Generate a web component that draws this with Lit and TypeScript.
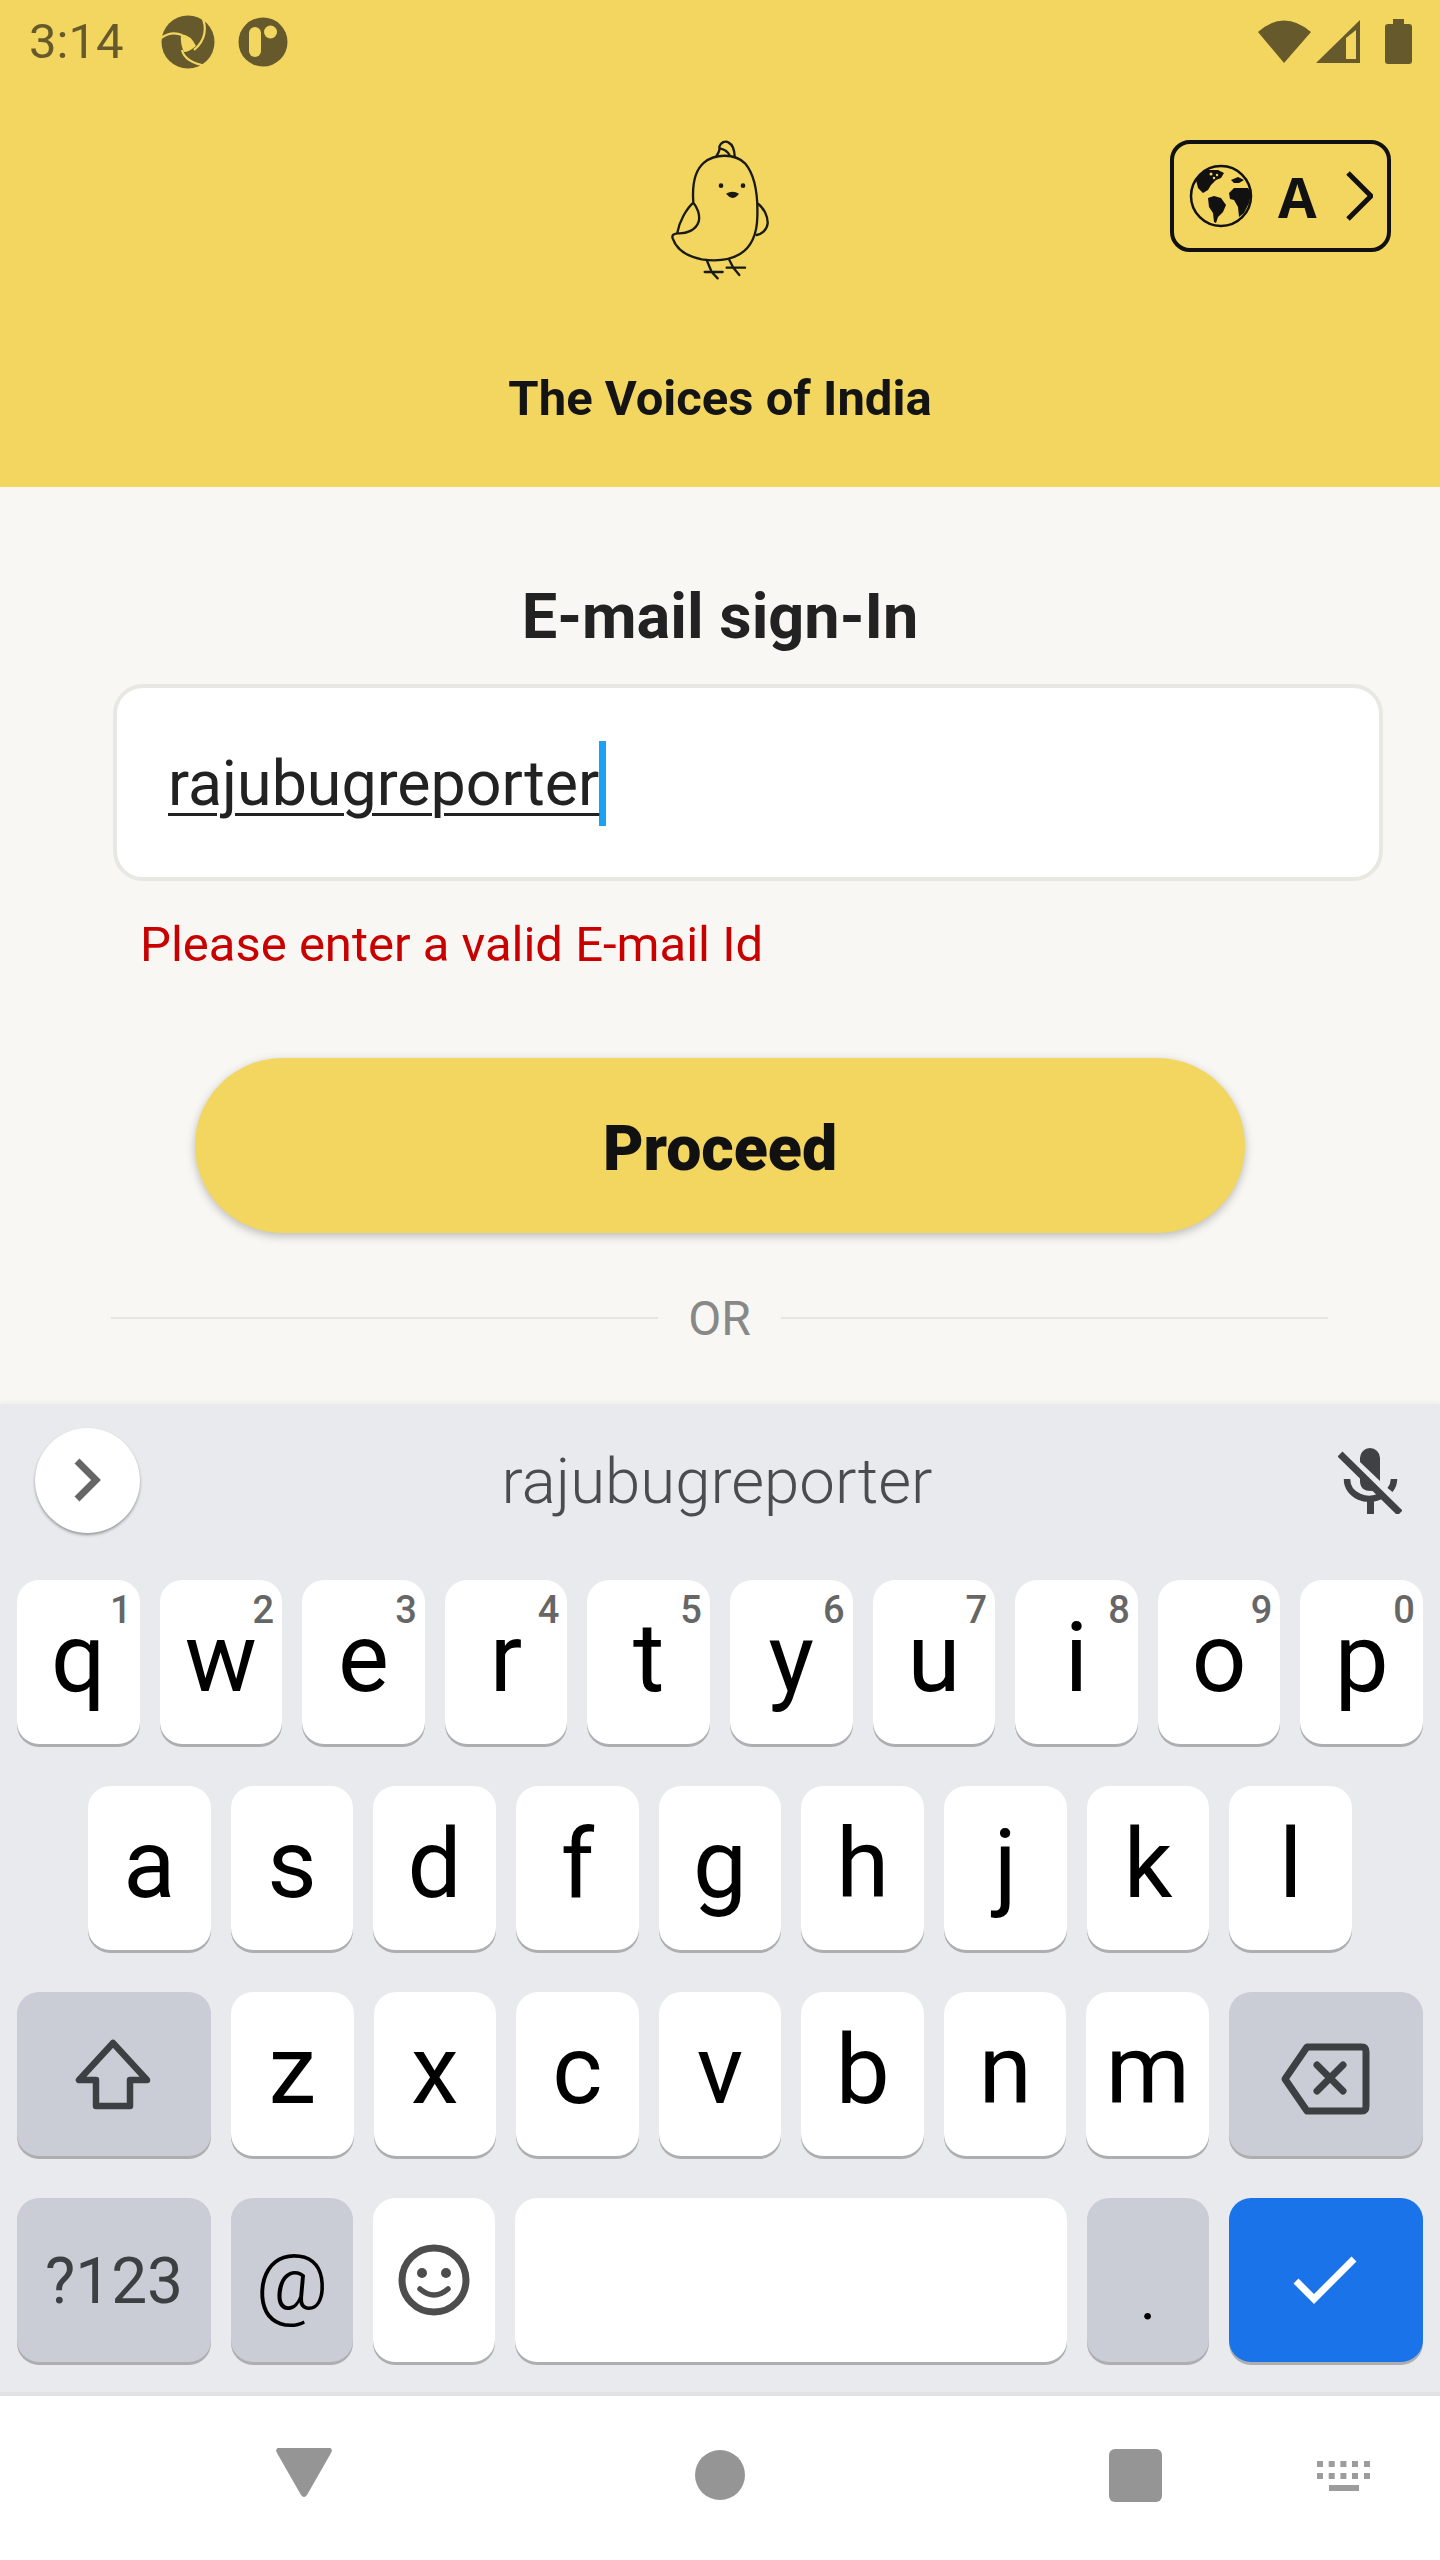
import { LitElement, html, css, svg } from 'lit';
import { customElement } from 'lit/decorators.js';

const ROW_1 = [['q', '1'], ['w', '2'], ['e', '3'], ['r', '4'], ['t', '5'], ['y', '6'], ['u', '7'], ['i', '8'], ['o', '9'], ['p', '0']];
const ROW_2 = ['a', 's', 'd', 'f', 'g', 'h', 'j', 'k', 'l'];
const ROW_3 = ['z', 'x', 'c', 'v', 'b', 'n', 'm'];

const statusLogos = html`
  <svg class="logo-a" width="56" height="56" viewBox="0 0 56 56">
    <circle cx="28" cy="28" r="26.500" fill="#665a2c"></circle>
    <path d="M21 20Q31 21 36 32Q29 38 24 38Q20 30 21 20Z" fill="#f2d660"></path>
    <g fill="none" stroke="#f2d660" stroke-width="2.200">
      <path d="M42 3C47 13 46 26 34 36"></path>
      <path d="M1 24C8 19 15 18 22 21"></path>
      <path d="M22 36C24 45 34 50 47 52"></path>
    </g>
  </svg>
  <svg class="logo-b" width="50" height="50" viewBox="0 0 50 50">
    <circle cx="25" cy="25" r="24.500" fill="#665a2c"></circle>
    <rect x="11" y="10" width="12" height="30" rx="6" fill="#f2d660"></rect>
    <circle cx="32.500" cy="15" r="6.500" fill="#f2d660"></circle>
  </svg>
`;

const statusRight = html`
  <svg class="status-icons" width="160" height="50" viewBox="1256 17 160 50">
    <path d="M1258 32Q1284 9 1311 32L1284 63Z" fill="#665a2c"></path>
    <path fill-rule="evenodd" d="M1316 63L1360 20V63ZM1346 38V59H1356V30Z" fill="#665a2c"></path>
    <path d="M1393 19H1404V24H1409Q1412 24 1412 27V61Q1412 64 1409 64H1388Q1385 64 1385 61V27Q1385 24 1388 24H1393Z" fill="#665a2c"></path>
  </svg>
`;

const globe = html`
  <svg width="64" height="64" viewBox="0 0 64 64">
    <circle cx="32" cy="32" r="30" fill="none" stroke="#111" stroke-width="2.500"></circle>
    <g fill="#111">
      <path d="M7 16L15 6L29 6L35 9L32 14L27 16L22 21L19 26L14 29L9 24Z"></path>
      <path d="M19 34L25 32L32 34L37 41L34 48L29 53L27 59L25 58L24 49L20 43Z"></path>
      <path d="M40 29L45 24L59 24L62 29L60 39L55 49L50 53L49 43L45 36L41 35Z"></path>
      <path d="M42 16L49 13L55 16L50 19L45 19Z"></path>
    </g>
    <g fill="#f2d660">
      <circle cx="22" cy="10" r="1.500"></circle>
      <circle cx="28" cy="11" r="1.200"></circle>
      <circle cx="25" cy="14" r="1.200"></circle>
    </g>
  </svg>
`;

const chick = html`
  <svg class="chick" width="200" height="170" viewBox="0 0 600 510">
    <g fill="none" stroke="#1a1a14" stroke-width="7" stroke-linecap="round" stroke-linejoin="round">
      <path d="M220 248C216 195 226 150 252 128C285 100 345 100 375 130C405 165 414 225 412 290C411 345 395 380 360 402C330 420 285 424 245 418C205 410 170 390 158 355C155 345 160 342 172 340C200 342 228 330 236 305C241 285 232 262 220 248C198 268 178 305 172 338"></path>
      <path d="M415 252C432 265 444 290 443 310C441 330 425 342 410 345"></path>
      <path d="M290 106C296 98 300 88 298 80C302 68 316 60 326 68C338 74 343 92 344 108"></path>
      <path d="M302 86C312 88 322 94 328 104"></path>
      <path d="M260 420L275 456M254 456H308M275 456L293 475"></path>
      <path d="M328 420L340 443M320 443H375M340 443L358 465"></path>
    </g>
    <circle cx="303" cy="197" r="7" fill="#1a1a14"></circle>
    <circle cx="369" cy="197" r="7" fill="#1a1a14"></circle>
    <path d="M318 221Q338 209 357 221Q347 234 337 234Q327 232 318 221Z" fill="#1a1a14"></path>
  </svg>
`;

@customElement('app-root')
export class AppRoot extends LitElement {
  static styles = css`
    :host {
      display: block;
      width: 1440px;
      height: 2560px;
      overflow: hidden;
      background: #f8f7f3;
      font-family: Roboto, 'Liberation Sans', sans-serif;
    }

    .page {
      display: flex;
      flex-direction: column;
      height: 2560px;
    }

    /* yellow header */
    .header {
      height: 487px;
      background: #f2d660;
      display: flex;
      flex-direction: column;
      flex: none;
    }

    .status {
      height: 84px;
      display: flex;
      align-items: center;
      padding-left: 29px;
      color: #665a2c;
      font-size: 49px;
    }

    .time {
      width: 131px;
      line-height: 84px;
    }

    .logo-b {
      margin-left: 22px;
    }

    .status-icons {
      margin-left: auto;
      margin-right: 24px;
    }

    .brand {
      display: flex;
      justify-content: space-between;
      align-items: flex-start;
      padding: 36px 49px 0 620px;
      height: 170px;
    }

    .lang {
      box-sizing: border-box;
      width: 221px;
      height: 112px;
      margin-top: 20px;
      border: 4px solid #111;
      border-radius: 20px;
      display: flex;
      align-items: center;
      padding-left: 15px;
      color: #111;
    }

    .lang-a {
      font-family: 'Open Sans', sans-serif;
      font-weight: 700;
      font-size: 56px;
      line-height: 1;
      margin-left: 25px;
      width: 67px;
    }

    .tagline {
      margin-top: 79px;
      text-align: center;
      font-size: 49px;
      line-height: 60px;
      font-weight: 700;
      color: #141414;
    }

    /* sign in form */
    .form {
      flex: none;
      height: 917px;
      display: flex;
      flex-direction: column;
      padding-top: 93px;
      box-sizing: border-box;
    }

    .title {
      text-align: center;
      font-size: 63px;
      line-height: 74px;
      font-weight: 700;
      color: #222;
    }

    .input {
      box-sizing: border-box;
      margin: 30px 57px 0 113px;
      height: 197px;
      flex: none;
      background: #fff;
      border: 4px solid #e8e8e3;
      border-radius: 30px;
      display: flex;
      align-items: center;
      padding: 2px 0 0 51px;
    }

    .value {
      font-size: 62.700px;
      color: #222;
      line-height: 85px;
      text-decoration: underline;
      text-decoration-thickness: 3px;
      text-underline-offset: 8px;
      border-right: 7px solid #1da1f2;
    }

    .error {
      margin: 36px 0 0 140px;
      font-size: 49px;
      line-height: 56px;
      color: #c80000;
    }

    .proceed {
      margin: 85px 195px 0;
      height: 175px;
      flex: none;
      box-sizing: border-box;
      padding-top: 5px;
      border-radius: 88px;
      background: #f2d660;
      box-shadow: 0 3px 10px rgba(0, 0, 0, 0.25);
      display: flex;
      align-items: center;
      justify-content: center;
      font-size: 62.500px;
      font-weight: 900;
      color: #111;
    }

    .or {
      margin: 60px 112px 0 111px;
      display: flex;
      align-items: center;
      gap: 30px;
      height: 50px;
      font-size: 48px;
      color: #888;
    }

    .or i {
      flex: 1;
      height: 2px;
      background: #e6e6e0;
    }

    /* keyboard */
    .keyboard {
      flex: none;
      height: 992px;
      box-sizing: border-box;
      background: #e8eaed;
      border-bottom: 4px solid #e1e2e3;
      padding: 0 17px;
      box-shadow: 0 -2px 5px rgba(0, 0, 0, 0.04);
    }

    .suggest {
      height: 176px;
      box-sizing: border-box;
      padding-bottom: 24px;
      display: flex;
      align-items: center;
    }

    .suggest-btn {
      width: 105px;
      height: 105px;
      margin-left: 18px;
      border-radius: 50%;
      background: #fff;
      box-shadow: 0 2px 3px rgba(0, 0, 0, 0.35);
      display: flex;
      align-items: center;
      justify-content: center;
      flex: none;
    }

    .suggest-text {
      flex: 1;
      text-align: center;
      font-size: 63.500px;
      font-weight: 300;
      color: #4a4c50;
      padding: 3px 44px 0 0;
    }

    .mic {
      margin-right: 21px;
      flex: none;
    }

    .row {
      display: flex;
      gap: 20px;
      height: 166px;
      margin-bottom: 40px;
    }

    .row.home {
      padding: 0 71px;
    }

    .key {
      flex: 1 1 0;
      position: relative;
      box-sizing: border-box;
      background: #fff;
      border-radius: 22px;
      box-shadow: 0 3px 0 #adaeb0;
      display: flex;
      align-items: center;
      justify-content: center;
      height: 164px;
      padding-bottom: 9px;
      font-size: 96px;
      line-height: 1;
      color: #000;
      font-weight: 400;
    }

    .key.special {
      background: #cacdd5;
    }

    .key.wide {
      flex: 0 0 194px;
      padding-bottom: 0;
    }

    .key.space {
      flex: 0 0 552px;
    }

    .key.enter {
      background: #1a73e8;
    }

    .key.sym {
      font-size: 64px;
      color: #3c4043;
      padding-top: 3px;
    }

    .key.at {
      font-size: 80px;
      font-weight: 300;
      padding: 4px 0 0;
    }

    .key.smile {
      padding: 0;
    }

    .key.dot {
      font-size: 60px;
      align-items: flex-end;
      padding-bottom: 33px;
    }

    .hint {
      position: absolute;
      top: 11px;
      right: 8px;
      font-size: 38px;
      line-height: 38px;
      font-weight: 500;
      color: #666;
    }

    /* android nav */
    .nav {
      flex: 1;
      background: #fff;
      display: flex;
      align-items: flex-start;
    }

    .nav svg {
      flex: none;
    }

    .nav-back {
      margin: 52px 0 0 276px;
    }

    .nav-home {
      margin: 54px 0 0 363px;
    }

    .nav-recent {
      margin: 53px 0 0 364px;
    }

    .nav-ime {
      margin: 65px 0 0 155px;
    }
  `;

  private letter(label: string) {
    return html`<div class="key">${label}</div>`;
  }

  render() {
    return html`
      <div class="page">
        <div class="header">
          <div class="status">
            <span class="time">3:14</span>
            ${statusLogos} ${statusRight}
          </div>
          <div class="brand">
            ${chick}
            <div class="lang">
              ${globe}
              <span class="lang-a">A</span>
              <svg width="28" height="52" viewBox="0 0 28 52">
                <path d="M3 3L26 26L3 49" fill="none" stroke="#111" stroke-width="5"></path>
              </svg>
            </div>
          </div>
          <div class="tagline">The Voices of India</div>
        </div>

        <div class="form">
          <div class="title">E-mail sign-In</div>
          <div class="input"><span class="value">rajubugreporter</span></div>
          <div class="error">Please enter a valid E-mail Id</div>
          <div class="proceed">Proceed</div>
          <div class="or"><i></i><span>OR</span><i></i></div>
        </div>

        <div class="keyboard">
          <div class="suggest">
            <div class="suggest-btn">
              <svg width="30" height="44" viewBox="0 0 30 44">
                <path d="M4 3L23 22L4 41" fill="none" stroke="#666" stroke-width="7"></path>
              </svg>
            </div>
            <div class="suggest-text">rajubugreporter</div>
            <svg class="mic" width="64" height="68" viewBox="0 0 64 68">
              <path d="M22 12A10 10 0 0 1 42 12V35L22 16Z" fill="#404144"></path>
              <path d="M22 30V35Q22 45 33 45Q36 45 37 44Z" fill="#404144"></path>
              <path d="M9 33C9 50 30 58 44 49M56 33Q56 39 52 44" fill="none" stroke="#404144" stroke-width="6.500"></path>
              <path d="M32.500 54V68" stroke="#404144" stroke-width="7"></path>
              <path d="M2 8L62 67" stroke="#404144" stroke-width="7"></path>
            </svg>
          </div>

          <div class="row">
            ${ROW_1.map(([l, n]) => html`<div class="key">${l}<span class="hint">${n}</span></div>`)}
          </div>
          <div class="row home">${ROW_2.map((l) => this.letter(l))}</div>
          <div class="row">
            <div class="key special wide">
              <svg width="194" height="163" viewBox="17 1992 194 163">
                <path d="M113 2042L79 2079H96V2105H130V2079H147Z" fill="none" stroke="#3c4043" stroke-width="6.500" stroke-linejoin="round"></path>
              </svg>
            </div>
            ${ROW_3.map((l) => this.letter(l))}
            <div class="key special wide">
              <svg width="194" height="163" viewBox="1228 1992 194 163">
                <path d="M1284 2078L1306 2046H1361Q1365 2046 1365 2051V2105Q1365 2110 1361 2110H1306Z" fill="none" stroke="#3c4043" stroke-width="7" stroke-linejoin="round"></path>
                <path d="M1316 2064L1342 2090M1342 2064L1316 2090" fill="none" stroke="#3c4043" stroke-width="7" stroke-linecap="round"></path>
              </svg>
            </div>
          </div>
          <div class="row">
            <div class="key special wide sym">?123</div>
            <div class="key special at">@</div>
            <div class="key smile">
              <svg width="72" height="72" viewBox="0 0 72 72">
                <circle cx="36" cy="36" r="32" fill="none" stroke="#4d4d4d" stroke-width="7"></circle>
                <circle cx="24" cy="29" r="5" fill="#4d4d4d"></circle>
                <circle cx="48" cy="29" r="5" fill="#4d4d4d"></circle>
                <path d="M22 45Q36 57 50 45" fill="none" stroke="#4d4d4d" stroke-width="5.500" stroke-linecap="round"></path>
              </svg>
            </div>
            <div class="key space"></div>
            <div class="key special dot">.</div>
            <div class="key special wide enter">
              <svg width="66" height="50" viewBox="0 0 66 50">
                <path d="M3 26L21 44L61 4" fill="none" stroke="#fff" stroke-width="7"></path>
              </svg>
            </div>
          </div>
        </div>

        <div class="nav">
          <svg class="nav-back" width="56" height="50" viewBox="0 0 56 50">
            <path d="M2 0H54Q57 1 55 5L31 47Q28 51 25 47L1 5Q-1 1 2 0Z" fill="#959595"></path>
          </svg>
          <svg class="nav-home" width="50" height="50" viewBox="0 0 50 50">
            <circle cx="25" cy="25" r="25" fill="#959595"></circle>
          </svg>
          <svg class="nav-recent" width="53" height="53" viewBox="0 0 53 53">
            <rect width="53" height="53" rx="6" fill="#959595"></rect>
          </svg>
          <svg class="nav-ime" width="54" height="30" viewBox="0 0 54 30" fill="#9c9c9c">
            ${[0, 11.700, 23.400, 35, 47].map((x) => svg`<rect x=${x} y="0" width="6" height="6"></rect><rect x=${x} y="12" width="6" height="6"></rect>`)}
            <rect x="12" y="24" width="30" height="6"></rect>
          </svg>
        </div>
      </div>
    `;
  }
}
